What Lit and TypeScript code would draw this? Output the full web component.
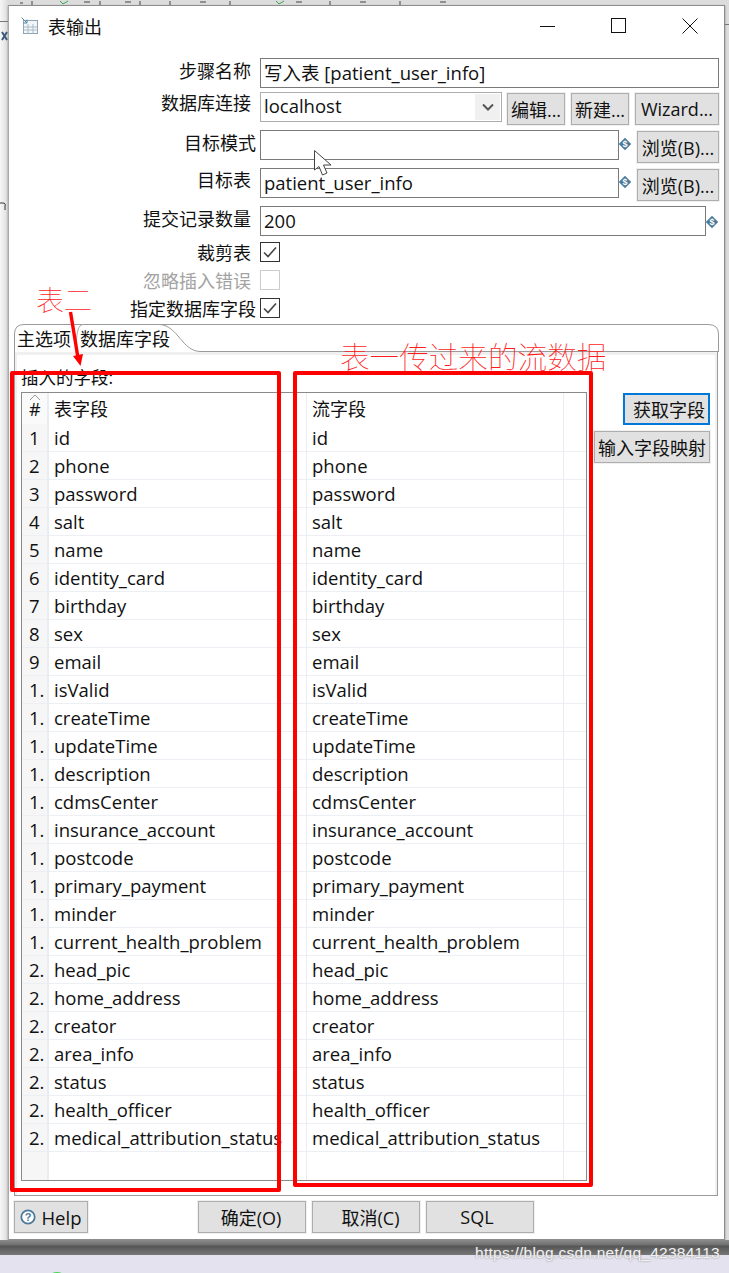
import { LitElement, html, css, svg } from "lit";
import { customElement } from "lit/decorators.js";

const FIELDS = [
  ["1", "id"], ["2", "phone"], ["3", "password"], ["4", "salt"], ["5", "name"],
  ["6", "identity_card"], ["7", "birthday"], ["8", "sex"], ["9", "email"],
  ["1.", "isValid"], ["1.", "createTime"], ["1.", "updateTime"], ["1.", "description"],
  ["1.", "cdmsCenter"], ["1.", "insurance_account"], ["1.", "postcode"],
  ["1.", "primary_payment"], ["1.", "minder"], ["1.", "current_health_problem"],
  ["2.", "head_pic"], ["2.", "home_address"], ["2.", "creator"], ["2.", "area_info"],
  ["2.", "status"], ["2.", "health_officer"], ["2.", "medical_attribution_status"],
];

const varIcon = html`<svg class="var" width="14" height="14" viewBox="0 0 14 14">
  <rect x="2.6" y="2.6" width="8.8" height="8.8" transform="rotate(45 7 7)" fill="#4b7a9b"/>
  <text x="7" y="10.2" text-anchor="middle" font-size="9" font-weight="700" fill="#fff" font-family="Liberation Sans">$</text>
</svg>`;

const check = html`<svg class="tick" width="20" height="20" viewBox="0 0 20 20">
  <path d="M4 10.5 L8 14.5 L16 5.5" fill="none" stroke="#444" stroke-width="1.6"/>
</svg>`;

@customElement("app-root")
export class AppRoot extends LitElement {
  static styles = css`
    :host { display: block; width: 729px; height: 1273px; position: relative; overflow: hidden; background: #e9e9e9;
      font-family: "Open Sans", "Noto Sans CJK SC", sans-serif; font-size: 18px; color: #111; }
    .page { padding: 5px 4px 0 8px; height: 1240px; box-sizing: border-box; background: linear-gradient(90deg, #f7f7f7, #dcdcdc 8px); }
    .window { height: 1235px; box-sizing: border-box; background: #fff; border: 1px solid #8c8c8c; border-left-color: #aaa; display: flex; flex-direction: column; box-shadow: 0 1px 2px #888; }
    .titlebar { height: 43px; flex: none; display: flex; align-items: center; padding: 0 0 4px 12px; box-sizing: border-box; }
    .title-text { margin-left: 9px; font-size: 18px; }
    .controls { margin-left: auto; display: flex; margin-right: -1px; }
    .ctl { width: 71px; height: 39px; display: flex; align-items: center; justify-content: center; }
    .form { padding: 9px 5px 0 0; flex: none; }
    .row { display: flex; align-items: flex-start; box-sizing: border-box; height: 38px; }
    .row.h34 { height: 34px; }
    .row.h36 { height: 36px; }
    .row.h28 { height: 28px; }
    .row.h26 { height: 26px; }
    .label { width: 242px; margin-right: 9px; flex: none; text-align: right; line-height: 26px; white-space: nowrap; }
    .label.far { width: 247px; margin-right: 4px; }
    .label.dis { color: #a3a3a3; }
    .label.up1 { margin-top: -1px; }
    .label.up2 { margin-top: -2px; }
    .input { height: 30px; box-sizing: border-box; border: 1px solid #7a7a7a; line-height: 28px; padding-left: 3px; background: #fff; flex: 1; min-width: 0; white-space: nowrap; overflow: hidden; font-size: 18.5px; }
    .input.short { flex: none; width: 359px; }
    .input.mid { flex: none; width: 446px; }
    .combo { flex: none; width: 242px; height: 30px; box-sizing: border-box; border: 1px solid #adadad; display: flex; align-items: center; padding: 1px; font-size: 18.5px; }
    .combo span { flex: 1; padding-left: 2px; line-height: 26px; margin-top: -2px; }
    .arrow { width: 25px; height: 26px; background: #f0f0f0; display: flex; align-items: center; justify-content: center; }
    .btn { box-sizing: border-box; height: 32px; background: #e1e1e1; border: 1px solid #adadad; outline: 1px solid #f0f0f0; display: flex; align-items: center; justify-content: center; white-space: nowrap; flex: none; }
    .b58 { width: 58px; margin-left: 5px; margin-top: 1px; }
    .b58 + .b58 { margin-left: 6px; }
    .b84 { width: 84px; margin-left: 6px; margin-top: 1px; }
    .browse { width: 82px; margin-left: 5px; margin-top: 1px; }
    .var { flex: none; margin: 7px 0 0 -1px; }
    .var.commit { margin-left: -1px; margin-top: 9px; }
    .box { width: 20px; height: 20px; box-sizing: border-box; border: 1px solid #333; flex: none; }
    .box.dis { border-color: #ccc; }
    .tick { display: block; margin: -1px; }

    .tabs { margin: 0 6px 0 5px; flex: 1; display: flex; flex-direction: column; min-height: 0; }
    .tabhead { height: 28px; flex: none; box-sizing: border-box; position: relative; display: flex; }
    .tabhead svg { position: absolute; left: 0; top: 0; }
    .tab1 { margin-left: 3px; line-height: 30px; width: 63px; position: relative; }
    .tab2 { line-height: 30px; position: relative; }
    .tabbody { flex: 1; box-sizing: border-box; border-top: 3px solid #f0f0f0; border-left: 3px solid #f0f0f0; border-right: 3px solid #f0f0f0; display: flex; padding: 0 0 15px 4px; background: #fff; position: relative; min-height: 0; }
    .edge { position: absolute; inset: -3px -3px 0 -3px; border: 1px solid #9a9a9a; border-top: none; pointer-events: none; }
    .left { width: 566px; flex: none; display: flex; flex-direction: column; min-height: 0; }
    .caption { height: 37px; line-height: 44px; flex: none; font-size: 17.5px; }
    .table { flex: 1; box-sizing: border-box; border: 1px solid #8a8a8a; display: grid; grid-template-columns: 27px 258px 257px 1fr; grid-template-rows: 31px repeat(26, 28px) 1fr; overflow: hidden; font-size: 18.5px; min-height: 0; }
    .cell { border-bottom: 1px solid #eceff3; border-right: 1px solid #e8edf3; padding-left: 5px; white-space: nowrap; overflow: hidden; line-height: 27px; box-sizing: border-box; }
    .num { background: #f6f6f6; padding-left: 7px; border-right: 2px solid #e8edf3; }
    .head { line-height: 33px; border-bottom: none; position: relative; font-size: 18px; }
    .head.num { background: #fafafa; }
    .head.num svg { position: absolute; left: 7px; top: 1px; }
    .last { border-right: none; }
    .fill { border-bottom: none; }
    .right { flex: 1; display: flex; flex-direction: column; align-items: flex-end; padding: 38px 5px 0 0; min-width: 0; }
    .get { width: 87px; border: 2px solid #0078d7; outline: none; justify-content: flex-end; padding-right: 3px; }
    .map { width: 116px; margin-top: 6px; flex: none; justify-content: flex-end; padding-right: 3px; }
    .footer { display: flex; flex: none; padding: 5px 0 0 5px; height: 43px; box-sizing: border-box; }
    .help { width: 74px; gap: 5px; font-size: 18.5px; }
    .ok { width: 108px; margin-left: 110px; padding-right: 2px; }
    .next { width: 108px; margin-left: 6px; }
    .cancel { padding-left: 9px; }
    .sql { padding-right: 6px; }

    .band { height: 33px; background: linear-gradient(#8c8c8c 0, #6e6e6e 5px, #555 6px, #777 15px, #e4e2ee 15px, #e4e2ee 100%); position: relative; }
    .mark { position: absolute; right: 9px; top: 3px; color: #f2f2f2; text-shadow: 0 0 2px #777; font-family: "Liberation Sans", sans-serif; font-size: 15.5px; letter-spacing: .25px; line-height: 20px; }
    .dot { position: absolute; left: 50px; bottom: -7px; width: 14px; height: 8px; border-radius: 50%; background: #46d656; }

    .redbox { position: absolute; border: 4px solid #ff0000; border-radius: 2px; box-sizing: border-box; pointer-events: none; }
    .rb1 { left: 10px; top: 371px; width: 271px; height: 821px; }
    .rb2 { left: 293px; top: 371px; width: 300px; height: 816px; }
    .note { position: absolute; color: #ff1c1c; font-weight: 100; font-family: "Noto Sans CJK SC", sans-serif; line-height: 36px; white-space: nowrap; pointer-events: none; }
    .n1 { left: 36px; top: 281px; font-size: 28px; }
    .n2 { left: 340px; top: 338px; font-size: 29.6px; }
    .over { position: absolute; left: 0; top: 0; pointer-events: none; }
  `;

  render() {
    return html`
      <div class="page">
        <div class="window">
          <div class="titlebar">
            <svg width="18" height="18" viewBox="0 0 18 18">
              <rect x="2.5" y="3.5" width="14" height="13" fill="#f3f6f9" stroke="#8fa5b5"/>
              <path d="M.5 .5 L6 6 M2.5 6 H6 V2.5" fill="none" stroke="#5b87a8"/>
              <path d="M2.5 10 H16.5 M2.5 13 H16.5 M7 7 V16.5 M12 7 V16.5" stroke="#a9bac6"/>
            </svg>
            <span class="title-text">表输出</span>
            <div class="controls">
              <div class="ctl"><svg width="16" height="16" viewBox="0 0 16 16"><path d="M0 8.5 H15" stroke="#111"/></svg></div>
              <div class="ctl"><svg width="16" height="16" viewBox="0 0 16 16"><rect x=".5" y=".5" width="14" height="14" fill="none" stroke="#111"/></svg></div>
              <div class="ctl"><svg width="16" height="16" viewBox="0 0 16 16"><path d="M.5 .5 L15.5 15.5 M15.5 .5 L.5 15.5" stroke="#111"/></svg></div>
            </div>
          </div>
          <div class="form">
            <div class="row h34"><div class="label">步骤名称</div><div class="input">写入表 [patient_user_info]</div></div>
            <div class="row"><div class="label up2">数据库连接</div>
              <div class="combo"><span>localhost</span><div class="arrow"><svg width="12" height="8" viewBox="0 0 12 8"><path d="M1 1.5 L6 6.5 L11 1.5" fill="none" stroke="#555" stroke-width="2"/></svg></div></div>
              <div class="btn b58">编辑...</div><div class="btn b58">新建...</div><div class="btn b84">Wizard...</div></div>
            <div class="row"><div class="label far">目标模式</div><div class="input short"></div>${varIcon}<div class="btn browse">浏览(B)...</div></div>
            <div class="row"><div class="label up1">目标表</div><div class="input short">patient_user_info</div>${varIcon}<div class="btn browse">浏览(B)...</div></div>
            <div class="row h36"><div class="label">提交记录数量</div><div class="input mid">200</div><svg class="var commit" width="14" height="14" viewBox="0 0 14 14"><rect x="2.6" y="2.6" width="8.8" height="8.8" transform="rotate(45 7 7)" fill="#4b7a9b"/><text x="7" y="10.2" text-anchor="middle" font-size="9" font-weight="700" fill="#fff" font-family="Liberation Sans">$</text></svg></div>
            <div class="row h28"><div class="label up2">裁剪表</div><div class="box">${check}</div></div>
            <div class="row h28"><div class="label dis up2">忽略插入错误</div><div class="box dis"></div></div>
            <div class="row h26"><div class="label far up2">指定数据库字段</div><div class="box">${check}</div></div>
          </div>
          <div class="tabs">
            <div class="tabhead">
              <svg width="705" height="28" viewBox="0 0 705 28">
                ${svg`<path d="M.5 28 V10 Q.5 .5 10 .5 H694 Q704.5 .5 704.5 10 V28" fill="none" stroke="#9a9a9a"/>
                <path d="M62 20 C63 8 64 1 69 .5" fill="none" stroke="#aaa"/>
                <path d="M146 .5 C164 2 168 27 186 27.5 H704" fill="none" stroke="#9a9a9a"/>`}
              </svg>
              <div class="tab1">主选项</div>
              <div class="tab2">数据库字段</div>
            </div>
            <div class="tabbody">
              <div class="edge"></div>
              <div class="left">
                <div class="caption">插入的字段:</div>
                <div class="table">
                  <div class="cell num head"><svg width="12" height="7" viewBox="0 0 12 7"><path d="M1 6 L6 1 L11 6" fill="none" stroke="#999"/></svg>#</div>
                  <div class="cell head">表字段</div>
                  <div class="cell head">流字段</div>
                  <div class="cell head last"></div>
                  ${FIELDS.map(([n, f]) => html`
                    <div class="cell num">${n}</div>
                    <div class="cell">${f}</div>
                    <div class="cell">${f}</div>
                    <div class="cell last"></div>`)}
                  <div class="cell num fill"></div><div class="cell fill"></div><div class="cell fill"></div><div class="cell last fill"></div>
                </div>
              </div>
              <div class="right">
                <div class="btn get">获取字段</div>
                <div class="btn map">输入字段映射</div>
              </div>
            </div>
          </div>
          <div class="footer">
            <div class="btn help"><svg width="16" height="16" viewBox="0 0 16 16"><circle cx="8" cy="8" r="6.7" fill="#fff" stroke="#4b7a9b" stroke-width="1.8"/><text x="8" y="12" text-anchor="middle" font-size="11" font-weight="700" fill="#4b7a9b" font-family="Liberation Sans">?</text></svg>Help</div>
            <div class="btn ok">确定(O)</div>
            <div class="btn next cancel">取消(C)</div>
            <div class="btn next sql">SQL</div>
          </div>
        </div>
      </div>
      <div class="band"><div class="mark">https://blog.csdn.net/qq_42384113</div><div class="dot"></div></div>

      <div class="redbox rb1"></div>
      <div class="redbox rb2"></div>
      <div class="note n1">表二</div>
      <div class="note n2">表一传过来的流数据</div>
      <svg class="over" width="729" height="400" viewBox="0 0 729 400">
        <path d="M70.5 312 L78 358" stroke="#f00" stroke-width="3.4" fill="none"/>
        <path d="M73 356 L80.5 366 L83 354 Z" fill="#f00"/>
        <path d="M314.5 150.5 V170 L319 166.5 L322.5 175 L327 173 L323.5 165 L331 165 Z" fill="#fff" stroke="#444"/>
        <path d="M20 3 h3 M32 1 v4 M84 2 h6 M100 1 v4 M125 2 h6 M140 1 v4 M170 1 v4 M200 2 h6 M230 1 v4 M296 2 h6 M330 1 v4 M360 2 h6 M400 1 v4 M440 2 h6" stroke="#444" fill="none"/>
        <path d="M60 1 l3 3 l5 -3 M276 1 l3 3 l5 -3" stroke="#3aa655" fill="none"/>
        <path d="M0 21.5 H8 M725 24.5 H729" stroke="#777"/>
        <path d="M2 32 L7 40 M7 32 L2 40" stroke="#3c5a78" stroke-width="2"/>
        <path d="M0 203 h3 a2 2 0 0 1 2 3 M5 206 v4" stroke="#333" fill="none"/>
      </svg>
    `;
  }
}
